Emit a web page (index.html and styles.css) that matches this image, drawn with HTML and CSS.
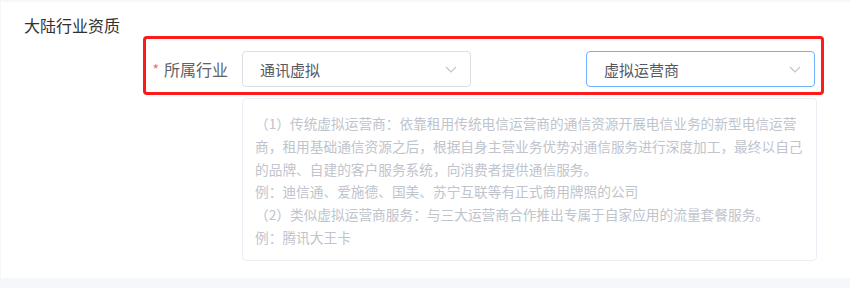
FILE: index.html
```html
<!DOCTYPE html>
<html lang="zh">
<head>
<meta charset="utf-8">
<link rel="stylesheet" href="styles.css">
</head>
<body>
<div class="card">
  <div class="title">大陆行业资质</div>
  <div class="form-row">
    <label class="label"><span class="req">*</span>所属行业</label>
    <div class="select">
      <span class="value">通讯虚拟</span>
      <svg class="arrow" width="12" height="7" viewBox="0 0 12 7"><polyline points="1,1 6,6 11,1" fill="none" stroke="#c0c4cc" stroke-width="1.2"/></svg>
    </div>
    <div class="select focus">
      <span class="value">虚拟运营商</span>
      <svg class="arrow" width="12" height="7" viewBox="0 0 12 7"><polyline points="1,1 6,6 11,1" fill="none" stroke="#c0c4cc" stroke-width="1.2"/></svg>
    </div>
  </div>
  <div class="desc">
    <div>（1）传统虚拟运营商：依靠租用传统电信运营商的通信资源开展电信业务的新型电信运营</div>
    <div>商，租用基础通信资源之后，根据自身主营业务优势对通信服务进行深度加工，最终以自己</div>
    <div>的品牌、自建的客户服务系统，向消费者提供通信服务。</div>
    <div>例：迪信通、爱施德、国美、苏宁互联等有正式商用牌照的公司</div>
    <div>（2）类似虚拟运营商服务：与三大运营商合作推出专属于自家应用的流量套餐服务。</div>
    <div>例：腾讯大王卡</div>
  </div>
  <div class="highlight"></div>
</div>
</body>
</html>
```
FILE: styles.css
```css
html, body {
  margin: 0;
  padding: 0;
}
body {
  background: #f5f7fa;
  font-family: "Noto Sans CJK SC", "Noto Sans", sans-serif;
  width: 850px;
  height: 288px;
  overflow: hidden;
}
.card {
  position: relative;
  margin: 2px 0 0 1px;
  height: 276px;
  background: #ffffff;
  padding-top: 12px;
  box-sizing: border-box;
}
.title {
  padding-left: 23px;
  font-size: 16px;
  line-height: 22px;
  color: #303133;
}
.form-row {
  display: flex;
  align-items: center;
  margin-top: 15px;
  margin-left: 142px;
  height: 36px;
}
.label {
  width: 99px;
  box-sizing: border-box;
  padding-right: 14px;
  text-align: right;
  font-size: 16px;
  color: #606266;
  white-space: nowrap;
}
.req {
  color: #f56c6c;
  font-size: 14px;
  margin-right: 5px;
  position: relative;
  top: -1px;
}
.select {
  width: 229px;
  height: 36px;
  box-sizing: border-box;
  border: 1px solid #dcdfe6;
  border-radius: 4px;
  display: flex;
  align-items: center;
  justify-content: space-between;
  padding: 0 13px 0 17px;
  margin-right: 115px;
}
.select.focus {
  border-color: #6fb1ff;
  margin-right: 0;
}
.value {
  font-size: 15px;
  color: #55585e;
}
.arrow {
  display: block;
}
.desc {
  margin: 11px 0 0 241px;
  width: 575px;
  height: 163px;
  box-sizing: border-box;
  border: 1px solid #ebeef5;
  border-radius: 4px;
  padding: 13px 12px 0 12px;
  font-size: 13.7px;
  line-height: 22.8px;
  color: #c0c4cc;
  white-space: nowrap;
}
.highlight {
  position: absolute;
  left: 142px;
  top: 34px;
  width: 681px;
  height: 59px;
  box-sizing: border-box;
  border: 3px solid #ff1a1a;
  border-radius: 4px;
  pointer-events: none;
}
```
